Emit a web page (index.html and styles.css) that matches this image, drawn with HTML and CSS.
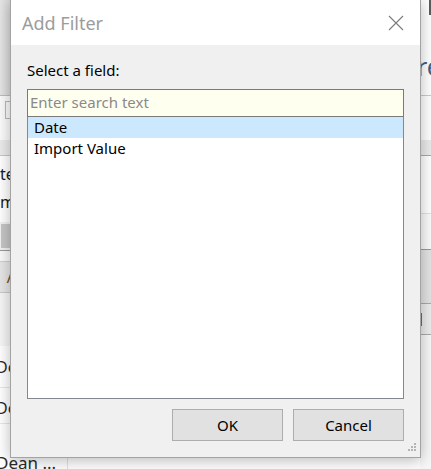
FILE: index.html
```html
<!DOCTYPE html>
<html>
<head>
<meta charset="utf-8">
<link rel="stylesheet" href="styles.css">
</head>
<body>
<div class="app">
  <div class="col-left">
    <div class="l1"></div>
    <div class="l2"><span class="chk"></span></div>
    <div class="l3"></div>
    <div class="l4"><div class="ln">te</div><div class="ln">m</div></div>
    <div class="l5"><span class="greybox"></span></div>
    <div class="l6"><div class="band"><span class="a">A</span></div></div>
    <div class="l7"></div>
    <div class="l8"><span class="cell">De</span></div>
    <div class="l9"><span class="cell">De</span></div>
    <div class="l10"><span class="cell">Dean ...</span></div>
  </div>
  <div class="col-mid"><div class="mid-bottom"></div></div>
  <div class="col-right">
    <div class="r1"><span class="darkbar"></span><span class="re">re</span></div>
    <div class="r2"></div>
    <div class="r3"></div>
    <div class="r4"></div>
    <div class="r5"></div>
    <div class="r6"></div>
    <div class="r7"><span class="bluebar"></span></div>
    <div class="r8"></div>
  </div>
</div>

<div class="dialog">
  <div class="titlebar">
    <span class="title">Add Filter</span>
    <svg class="close" width="16" height="16" viewBox="0 0 16 16">
      <path d="M1 1 L15 15 M15 1 L1 15" stroke="#7a7a7a" stroke-width="1.1" fill="none"/>
    </svg>
  </div>
  <div class="body">
    <div class="label">Select a field:</div>
    <div class="search">Enter search text</div>
    <div class="list">
      <div class="item selected">Date</div>
      <div class="item">Import Value</div>
    </div>
    <div class="buttons">
      <div class="btn">OK</div>
      <div class="btn">Cancel</div>
    </div>
  </div>
  <svg class="grip" width="11" height="11" viewBox="0 0 11 11">
    <g fill="#b4b4b4">
      <rect x="8" y="0" width="2" height="2"/>
      <rect x="5" y="3" width="2" height="2"/>
      <rect x="8" y="3" width="2" height="2"/>
      <rect x="2" y="6" width="2" height="2"/>
      <rect x="5" y="6" width="2" height="2"/>
      <rect x="8" y="6" width="2" height="2"/>
    </g>
  </svg>
</div>
</body>
</html>
```

FILE: styles.css
```css
html, body {
  margin: 0;
  padding: 0;
}
body {
  width: 431px;
  height: 469px;
  overflow: hidden;
  position: relative;
  background: #ffffff;
  font-family: "Noto Sans", "Open Sans", sans-serif;
}

/* ---------- background application ---------- */
.app {
  display: grid;
  grid-template-columns: 10px 1fr 11px;
  height: 469px;
  background: #fdfdfd;
}
.col-left, .col-right, .col-mid {
  display: flex;
  flex-direction: column;
  min-width: 0;
}
.col-left { overflow: visible; font-size: 16px; color: #1a1a1a; }
.col-right { overflow: hidden; }

.l1 { height: 95px; background: linear-gradient(to right, #e6e6e6, #d9d9d9); border-bottom: 1px solid #bdbdbd; }
.l2 { height: 44px; background: #fbfbfb; }
.chk {
  display: block;
  width: 12px;
  height: 18px;
  margin: 5px 0 0 5px;
  border: 1px solid #b9b9b9;
  box-sizing: border-box;
}
.l3 { height: 15px; background: #ebebeb; border-bottom: 1px solid #c6c6c6; }
.l4 { height: 66px; background: #ffffff; padding-top: 4px; box-sizing: border-box; }
.ln { height: 28px; line-height: 28px; white-space: nowrap; }
.l5 { height: 26px; background: #f2f2f2; border-bottom: 1px solid #9a9a9a; padding-top: 2px; box-sizing: content-box; }
.greybox { display: block; margin-left: 1px; height: 24px; background: #c6c6c6; }
.l6 { height: 42px; background: #fafafa; padding-top: 10px; box-sizing: border-box; }
.band {
  height: 30px;
  background: #e6e6e6;
  border-top: 1px solid #cfcfcf;
  border-bottom: 1px solid #c9c9c9;
  display: flex;
  align-items: center;
  justify-content: flex-end;
}
.a { font-size: 16px; color: #7a5020; margin-right: -7px; }
.l7 { height: 53px; background: #f6f6f6; }
.l8, .l9, .l10 {
  background: #ffffff;
  border-bottom: 1px solid #e6e6e6;
  display: flex;
  align-items: center;
  white-space: nowrap;
}
.l8 { height: 41px; }
.l9 { height: 35px; align-items: flex-start; padding-top: 10px; box-sizing: border-box; height: 36px; }
.l9 .cell { line-height: 20px; }
.l10 { flex: 1; border-bottom: none; align-items: flex-end; }
.cell { margin-left: -4px; color: #2a2a2a; }
.l10 .cell { line-height: 20px; margin-bottom: -4px; font-size: 17px; }

.col-mid { justify-content: flex-end; }
.mid-bottom {
  height: 14px;
  margin-left: 57px;
  border-left: 1px solid #e2e2e2;
}

.r1 { height: 95px; background: #ffffff; border-bottom: 1px solid #cbcbcb; position: relative; }
.darkbar { position: absolute; right: 0; top: 0; width: 2px; height: 15px; background: #5c5c5c; }
.re {
  display: block;
  padding-top: 50px;
  margin-left: -3px;
  font-size: 25px;
  line-height: 32px;
  color: #3e6184;
  white-space: nowrap;
}
.r2 { height: 44px; background: #ffffff; }
.r3 { height: 15px; background: #ebebeb; border-bottom: 1px solid #a9a9a9; }
.r4 { height: 57px; background: #ffffff; border-bottom: 1px solid #e3e3e3; }
.r5 { height: 35px; background: #fafafa; border-bottom: 1px solid #9a9a9a; }
.r6 { height: 53px; background: #e3e3e3; border-bottom: 1px solid #aaaaaa; }
.r7 { height: 30px; background: #ececec; border-bottom: 1px solid #aaaaaa; }
.bluebar { display: block; width: 2px; height: 13px; margin-top: 9px; background: #3d78b5; }
.r8 { flex: 1; background: #f7f7f7; }

/* ---------- dialog ---------- */
.dialog {
  position: absolute;
  left: 10px;
  top: -1px;
  width: 411px;
  height: 459px;
  box-sizing: border-box;
  border: 1px solid #a3a3a3;
  background: #f0f0f0;
  box-shadow: 0 2px 14px rgba(0, 0, 0, 0.28);
  display: flex;
  flex-direction: column;
}
.titlebar {
  height: 45px;
  flex: none;
  background: #ffffff;
  display: flex;
  align-items: center;
  padding: 0 16px 0 11px;
}
.title {
  font-size: 18px;
  color: #9c9c9c;
  flex: 1;
  padding-top: 1px;
}
.close { flex: none; }

.body {
  flex: 1;
  display: flex;
  flex-direction: column;
  padding: 15px 16px 16px 16px;
  font-size: 15px;
  color: #000;
}
.label {
  height: 20px;
  line-height: 20px;
  margin-bottom: 9px;
}
.search {
  height: 28px;
  box-sizing: border-box;
  border: 1px solid #7a7a7a;
  background: #fffff0;
  color: #8a8a8a;
  padding-left: 2px;
  line-height: 25px;
  flex: none;
}
.list {
  height: 282px;
  flex: none;
  box-sizing: border-box;
  border: 1px solid #828790;
  border-top: none;
  background: #ffffff;
}
.item {
  height: 21px;
  line-height: 21px;
  padding-left: 6px;
}
.item.selected { background: #cce8ff; }

.buttons {
  display: flex;
  justify-content: flex-end;
  gap: 10px;
  margin-top: 10px;
}
.btn {
  width: 111px;
  height: 32px;
  box-sizing: border-box;
  border: 1px solid #adadad;
  background: #e1e1e1;
  display: flex;
  align-items: center;
  justify-content: center;
  padding-bottom: 1px;
}
.grip {
  position: absolute;
  right: 3px;
  bottom: 3px;
}
```
